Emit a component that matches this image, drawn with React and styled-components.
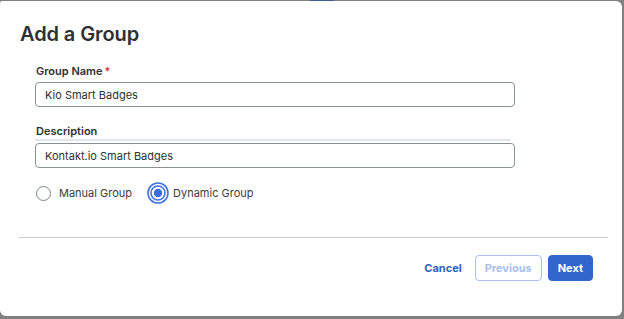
import React from "react";
import styled, { createGlobalStyle } from "styled-components";

const Global = createGlobalStyle`
  html, body { margin: 0; padding: 0; }
  body {
    background: #808080;
    font-family: Inter, "Noto Sans", sans-serif;
    width: 624px;
    height: 319px;
    overflow: hidden;
  }
`;

const Backdrop = styled.div`
  width: 624px;
  height: 319px;
  display: flex;
  flex-direction: column;
`;

const TopStrip = styled.div`
  height: 1px;
  display: flex;
  padding-left: 310px;
`;

const BlueSliver = styled.div`
  width: 24px;
  background: #3d5e94;
`;

const Panel = styled.div`
  width: 622px;
  height: 315px;
  background: #fff;
  border-radius: 2px 6px 6px 6px;
  box-sizing: border-box;
  padding: 20px 14px 0 19px;
  display: flex;
  flex-direction: column;
`;

const Title = styled.h2`
  margin: 0 0 0 1px;
  font-size: 20px;
  line-height: 26px;
  font-weight: 600;
  color: #2e3033;
  letter-spacing: -0.1px;
`;

const Form = styled.div`
  padding: 16px 0 0 16px;
  width: 480px;
  display: flex;
  flex-direction: column;
`;

const Field = styled.div`
  display: flex;
  flex-direction: column;
  margin-bottom: ${(p) => p.$mb || 0}px;
`;

const Label = styled.label`
  font-size: 11px;
  line-height: 16px;
  font-weight: 600;
  color: #2e3033;
  padding-left: 1px;
  margin-bottom: ${(p) => p.$mb}px;
  border-bottom: ${(p) => (p.$line ? "2px solid #e1e6ec" : "none")};
  margin-right: 4px;
`;

const Req = styled.span`
  color: #d9363e;
  margin-left: 2px;
`;

const Input = styled.div`
  height: 25px;
  box-sizing: border-box;
  border: 1px solid #8b9099;
  border-radius: 4px;
  padding: 0 9px;
  display: flex;
  align-items: center;
  font-size: 11px;
  color: #2e3033;
`;

const RadioRow = styled.div`
  display: flex;
  align-items: center;
  gap: 18px;
  margin-top: 14px;
  padding-left: 1px;
`;

const RadioOption = styled.div`
  display: flex;
  align-items: center;
  gap: ${(p) => (p.$checked ? 4 : 8)}px;
  font-size: 11px;
  color: #3a3c40;
`;

const RadioCircle = styled.span`
  box-sizing: border-box;
  width: 15px;
  height: 15px;
  border-radius: 50%;
  border: 1.5px solid #7d828a;
  display: inline-block;
`;

const CheckedWrap = styled.span`
  width: 22px;
  height: 22px;
  display: inline-flex;
  align-items: center;
  justify-content: center;
  margin-left: -3px;
`;

const Divider = styled.hr`
  border: none;
  border-top: 1px solid #cdcdcd;
  margin: 33px 0 0 0;
  width: 589px;
`;

const Footer = styled.div`
  display: flex;
  justify-content: flex-end;
  align-items: center;
  gap: 6px;
  padding: 17px 15px 0 0;
`;

const TextButton = styled.button`
  background: none;
  border: none;
  font-family: inherit;
  font-size: 11px;
  font-weight: 700;
  color: #2f62c3;
  padding: 0;
  margin-right: 7px;
`;

const Button = styled.button`
  height: 26px;
  box-sizing: border-box;
  border-radius: 4px;
  font-family: inherit;
  font-size: 11px;
  font-weight: 700;
  padding: 0 ${(p) => p.$px}px;
  border: 1px solid ${(p) => (p.$primary ? "#3366cc" : "#a8c3f3")};
  background: ${(p) => (p.$primary ? "#3366cc" : "#fff")};
  color: ${(p) => (p.$primary ? "#fff" : "#a9c0ee")};
`;

function CheckedRadio() {
  return (
    <CheckedWrap>
      <svg width="22" height="22" viewBox="0 0 22 22">
        <circle cx="11" cy="11" r="10" fill="none" stroke="#3f74dc" strokeWidth="1.6" />
        <circle cx="11" cy="11" r="7" fill="none" stroke="#3f74dc" strokeWidth="1.6" />
        <circle cx="11" cy="11" r="4.2" fill="#3a6fd8" />
      </svg>
    </CheckedWrap>
  );
}

export default function App() {
  return (
    <>
      <Global />
      <Backdrop>
        <TopStrip>
          <BlueSliver />
        </TopStrip>
        <Panel>
          <Title>Add a Group</Title>
          <Form>
            <Field $mb={16}>
              <Label $mb={3}>
                Group Name<Req>*</Req>
              </Label>
              <Input>Kio Smart Badges</Input>
            </Field>
            <Field>
              <Label $mb={2} $line>
                Description
              </Label>
              <Input>Kontakt.io Smart Badges</Input>
            </Field>
            <RadioRow>
              <RadioOption>
                <RadioCircle />
                Manual Group
              </RadioOption>
              <RadioOption $checked>
                <CheckedRadio />
                Dynamic Group
              </RadioOption>
            </RadioRow>
          </Form>
          <Divider />
          <Footer>
            <TextButton>Cancel</TextButton>
            <Button $px={9}>Previous</Button>
            <Button $primary $px={9}>
              Next
            </Button>
          </Footer>
        </Panel>
      </Backdrop>
    </>
  );
}
